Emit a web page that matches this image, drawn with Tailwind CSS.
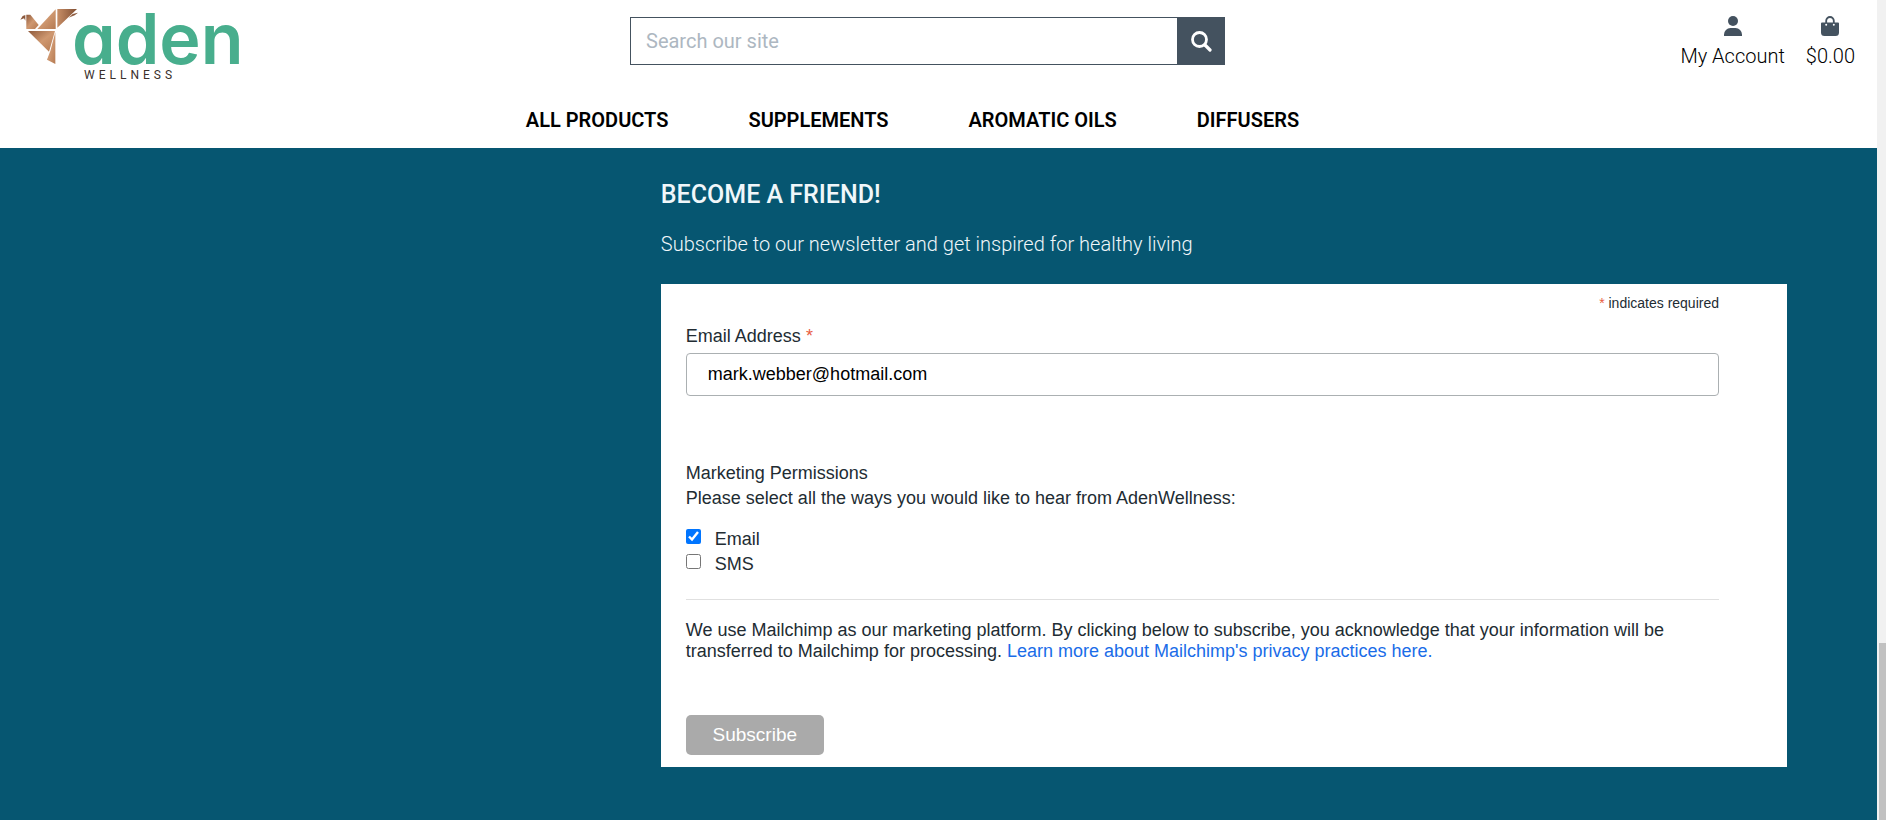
<!DOCTYPE html>
<html lang="en">
<head>
<meta charset="utf-8">
<title>Aden Wellness</title>
<script src="https://cdn.jsdelivr.net/npm/@tailwindcss/browser@4"></script>
</head>
<body class="flex min-h-screen bg-white">
  <div class="flex min-w-0 flex-1 flex-col">
    <header class="flex flex-col pr-[22px] font-['Roboto',sans-serif]">
      <div class="grid h-[100px] grid-cols-[1fr_minmax(0,595px)_1fr] items-start">
        <a href="#" aria-label="Aden Wellness" class="flex pl-5 pt-2">
          <svg class="h-[58px] w-[58px] shrink-0" viewBox="60 24 174 174">
            <defs>
              <linearGradient id="copper" x1="0" y1="0" x2="1" y2="1">
                <stop offset="0" stop-color="#8f5a3c"/><stop offset="0.5" stop-color="#cf9870"/><stop offset="1" stop-color="#b57a52"/>
              </linearGradient>
              <linearGradient id="copperWing" x1="0" y1="0" x2="1" y2="0">
                <stop offset="0" stop-color="#c78e66"/><stop offset="1" stop-color="#7d4b30"/>
              </linearGradient>
            </defs>
            <path fill="#8a573b" d="M61 59 68 48 76 45V62L72 55Z"/>
            <path fill="url(#copper)" d="M79 44H91L116 75 105 87H79Z"/>
            <path fill="url(#copper)" d="M112 87 167 28V87Z"/>
            <path fill="url(#copperWing)" d="M172 27H231L172 83ZM206 53 218 42 234 38 224 46Z"/>
            <path fill="url(#copper)" d="M84 93H165L147 155Z"/>
            <path fill="url(#copper)" d="M166 97V192L141 179 151 153Z"/>
          </svg>
          <span class="-ml-[6px] flex flex-col">
            <span class="h-[60px] font-['Inter',sans-serif] text-[70px] leading-[61px] font-semibold text-[#48ae8d] [font-feature-settings:'cv11'_1]">aden</span>
            <span class="pl-3 font-['Roboto',sans-serif] text-[12px] leading-[14px] tracking-[4px] text-[#3a302b]">WELLNESS</span>
          </span>
        </a>
        <form class="mt-[17px] flex h-12" onsubmit="return false">
          <input type="search" aria-label="Search our site" placeholder="Search our site" class="min-w-0 flex-1 border border-[#44525f] px-[15px] text-[20px] outline-none placeholder:text-[#adb7c1]">
          <button aria-label="Search" class="flex w-[47px] items-center justify-center bg-[#44525f]">
            <svg class="size-[21px]" viewBox="0 0 21 21" fill="none" stroke="#fff" stroke-linecap="round"><circle cx="8.5" cy="8.5" r="7" stroke-width="2.8"/><path stroke-width="3.2" d="m14 14 5 5"/></svg>
          </button>
        </form>
        <div class="flex justify-end gap-[21px] pt-4 text-[20px] leading-6 font-light text-black">
          <a href="#" class="flex flex-col items-center gap-2">
            <svg class="h-5 w-[18px]" viewBox="0 0 18 20" fill="#44525f"><circle cx="9" cy="5" r="5"/><path d="M0 20v-1.500A6.500 6.500 0 0 1 6.500 12h5a6.500 6.500 0 0 1 6.500 6.500V20Z"/></svg>
            My Account
          </a>
          <a href="#" class="flex flex-col items-center gap-2">
            <svg class="h-5 w-[18px]" viewBox="0 0 18 20"><path fill="#44525f" d="M1 6.500h16a1 1 0 0 1 1 1V16.500a3.500 3.500 0 0 1-3.500 3.500h-11A3.500 3.500 0 0 1 0 16.500V7.500a1 1 0 0 1 1-1Z"/><path d="M5.200 8.500V4.800a3.800 3.800 0 0 1 7.600 0v3.700" fill="none" stroke="#44525f" stroke-width="1.800"/><circle cx="5.200" cy="8.800" r="1" fill="#fff"/><circle cx="12.800" cy="8.800" r="1" fill="#fff"/></svg>
            $0.00
          </a>
        </div>
      </div>
      <nav class="flex h-12 justify-center gap-20 pt-2 pr-[30px] text-[20px] leading-6 font-semibold whitespace-nowrap text-black">
        <a href="#">ALL PRODUCTS</a>
        <a href="#">SUPPLEMENTS</a>
        <a href="#">AROMATIC OILS</a>
        <a href="#">DIFFUSERS</a>
      </nav>
    </header>
    <main class="flex-1 bg-[#065671] pb-10">
      <section class="mr-[90px] ml-auto w-3/5">
        <div class="pt-8 font-['Roboto',sans-serif] text-[#f0f7fa]">
          <h1 class="text-[25px] leading-[30px] font-medium">BECOME A FRIEND!</h1>
          <p class="mt-[22px] pb-7 text-[20px] leading-6 font-light">Subscribe to our newsletter and get inspired for healthy living</p>
        </div>
        <form onsubmit="return false" class="bg-white pt-[10px] pr-[68px] pb-3 pl-[25px] font-['Liberation_Sans',Arial,sans-serif] text-[18px] leading-[25px] text-[#222c33]">
          <p class="text-right text-[14px] leading-[18px]"><span class="text-[#e85c41]">*</span> indicates required</p>
          <label for="email" class="mt-3 block">Email Address <span class="text-[#e85c41]">*</span></label>
          <input id="email" type="email" value="mark.webber@hotmail.com" class="mt-1 block h-[43px] w-full rounded-[4px] border border-[#abb0b2] px-[21px] text-black outline-none">
          <fieldset class="mt-[65px] border-b border-[#e0e0e0] pb-[22px]">
            <legend>Marketing Permissions</legend>
            <p>Please select all the ways you would like to hear from AdenWellness:</p>
            <label class="mt-4 flex gap-[14px]"><input type="checkbox" checked class="mt-[2px] size-[15px] accent-[#0075ff]">Email</label>
            <label class="flex gap-[14px]"><input type="checkbox" class="mt-[2px] size-[15px]">SMS</label>
          </fieldset>
          <p class="mt-5 leading-[21px]">We use Mailchimp as our marketing platform. By clicking below to subscribe, you acknowledge that your information will be transferred to Mailchimp for processing. <a href="#" class="text-[#1a6ce8]">Learn more about Mailchimp's privacy practices here.</a></p>
          <button class="mt-[53px] block h-10 w-[138px] rounded-[5px] bg-[#aaaaaa] pb-[2px] text-[19px] text-white">Subscribe</button>
        </form>
      </section>
    </main>
  </div>
  <div aria-hidden="true" class="flex w-[9px] shrink-0 flex-col justify-end bg-[#f1f1f1] pl-[2px]">
    <div class="h-[177px] bg-[#c1c1c1]"></div>
  </div>
</body>
</html>
